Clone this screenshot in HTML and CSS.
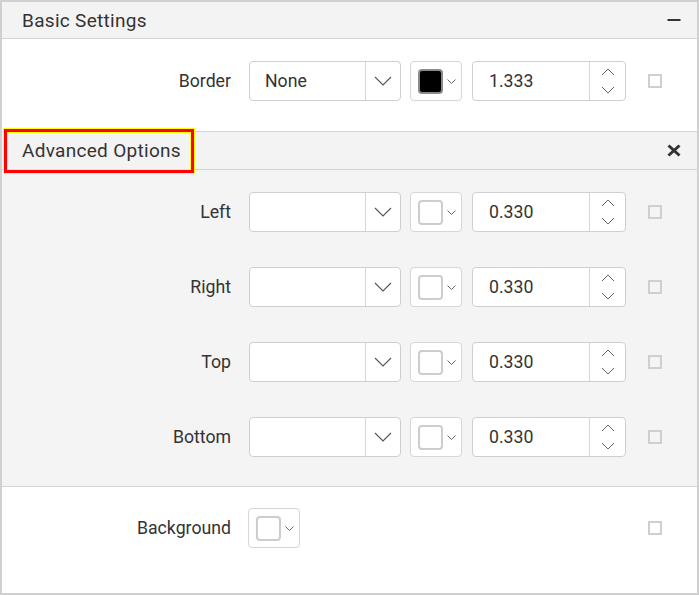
FILE: index.html
```html
<!DOCTYPE html>
<html>
<head>
<meta charset="utf-8">
<link rel="stylesheet" href="styles.css">
</head>
<body>
<div class="panel">
  <div class="head">
    <span class="head-title">Basic Settings</span>
    <svg class="head-icon" width="14" height="14" viewBox="0 0 14 14"><line x1="0.5" y1="7" x2="13.5" y2="7" stroke="#333" stroke-width="2"/></svg>
  </div>
  <div class="section basic">
    <div class="row">
      <span class="label">Border</span>
      <div class="dropdown"><span class="dd-text">None</span><span class="dd-btn"><svg width="18" height="10" viewBox="0 0 18 10"><polyline points="1,1 9,9 17,1" fill="none" stroke="#555" stroke-width="1.1"/></svg></span></div>
      <div class="picker"><span class="swatch swatch-black"></span><svg width="9" height="6" viewBox="0 0 9 6"><polyline points="0.5,0.5 4.5,4.5 8.5,0.5" fill="none" stroke="#666" stroke-width="1"/></svg></div>
      <div class="numeric"><span class="num-text">1.333</span><span class="spin"><svg width="14" height="26" viewBox="0 0 14 26"><polyline points="1,7 7,1 13,7" fill="none" stroke="#666" stroke-width="1"/><polyline points="1,19 7,25 13,19" fill="none" stroke="#666" stroke-width="1"/></svg></span></div>
      <span class="check"></span>
    </div>
  </div>
  <div class="head adv-head">
    <span class="adv-title">Advanced Options</span>
    <svg class="head-icon" width="14" height="13" viewBox="0 0 14 13"><line x1="1.5" y1="1.5" x2="12.5" y2="11.5" stroke="#333" stroke-width="3"/><line x1="12.5" y1="1.5" x2="1.5" y2="11.5" stroke="#333" stroke-width="3"/></svg>
  </div>
  <div class="section advanced">
    <div class="row">
      <span class="label">Left</span>
      <div class="dropdown"><span class="dd-text"></span><span class="dd-btn"><svg width="18" height="10" viewBox="0 0 18 10"><polyline points="1,1 9,9 17,1" fill="none" stroke="#555" stroke-width="1.1"/></svg></span></div>
      <div class="picker"><span class="swatch"></span><svg width="9" height="6" viewBox="0 0 9 6"><polyline points="0.5,0.5 4.5,4.5 8.5,0.5" fill="none" stroke="#666" stroke-width="1"/></svg></div>
      <div class="numeric"><span class="num-text">0.330</span><span class="spin"><svg width="14" height="26" viewBox="0 0 14 26"><polyline points="1,7 7,1 13,7" fill="none" stroke="#666" stroke-width="1"/><polyline points="1,19 7,25 13,19" fill="none" stroke="#666" stroke-width="1"/></svg></span></div>
      <span class="check"></span>
    </div>
    <div class="row">
      <span class="label">Right</span>
      <div class="dropdown"><span class="dd-text"></span><span class="dd-btn"><svg width="18" height="10" viewBox="0 0 18 10"><polyline points="1,1 9,9 17,1" fill="none" stroke="#555" stroke-width="1.1"/></svg></span></div>
      <div class="picker"><span class="swatch"></span><svg width="9" height="6" viewBox="0 0 9 6"><polyline points="0.5,0.5 4.5,4.5 8.5,0.5" fill="none" stroke="#666" stroke-width="1"/></svg></div>
      <div class="numeric"><span class="num-text">0.330</span><span class="spin"><svg width="14" height="26" viewBox="0 0 14 26"><polyline points="1,7 7,1 13,7" fill="none" stroke="#666" stroke-width="1"/><polyline points="1,19 7,25 13,19" fill="none" stroke="#666" stroke-width="1"/></svg></span></div>
      <span class="check"></span>
    </div>
    <div class="row">
      <span class="label">Top</span>
      <div class="dropdown"><span class="dd-text"></span><span class="dd-btn"><svg width="18" height="10" viewBox="0 0 18 10"><polyline points="1,1 9,9 17,1" fill="none" stroke="#555" stroke-width="1.1"/></svg></span></div>
      <div class="picker"><span class="swatch"></span><svg width="9" height="6" viewBox="0 0 9 6"><polyline points="0.5,0.5 4.5,4.5 8.5,0.5" fill="none" stroke="#666" stroke-width="1"/></svg></div>
      <div class="numeric"><span class="num-text">0.330</span><span class="spin"><svg width="14" height="26" viewBox="0 0 14 26"><polyline points="1,7 7,1 13,7" fill="none" stroke="#666" stroke-width="1"/><polyline points="1,19 7,25 13,19" fill="none" stroke="#666" stroke-width="1"/></svg></span></div>
      <span class="check"></span>
    </div>
    <div class="row">
      <span class="label">Bottom</span>
      <div class="dropdown"><span class="dd-text"></span><span class="dd-btn"><svg width="18" height="10" viewBox="0 0 18 10"><polyline points="1,1 9,9 17,1" fill="none" stroke="#555" stroke-width="1.1"/></svg></span></div>
      <div class="picker"><span class="swatch"></span><svg width="9" height="6" viewBox="0 0 9 6"><polyline points="0.5,0.5 4.5,4.5 8.5,0.5" fill="none" stroke="#666" stroke-width="1"/></svg></div>
      <div class="numeric"><span class="num-text">0.330</span><span class="spin"><svg width="14" height="26" viewBox="0 0 14 26"><polyline points="1,7 7,1 13,7" fill="none" stroke="#666" stroke-width="1"/><polyline points="1,19 7,25 13,19" fill="none" stroke="#666" stroke-width="1"/></svg></span></div>
      <span class="check"></span>
    </div>
  </div>
  <div class="section bg">
    <div class="row">
      <span class="label">Background</span>
      <div class="picker picker-bg"><span class="swatch"></span><svg width="9" height="6" viewBox="0 0 9 6"><polyline points="0.5,0.5 4.5,4.5 8.5,0.5" fill="none" stroke="#666" stroke-width="1"/></svg></div>
      <span class="check"></span>
    </div>
  </div>
</div>
</body>
</html>
```

FILE: styles.css
```css
* { box-sizing: border-box; }
html, body { margin: 0; padding: 0; background: #fff; }
body {
  font-family: Roboto, "Liberation Sans", sans-serif;
  color: #333;
  width: 699px;
  height: 595px;
}
.panel {
  width: 699px;
  height: 595px;
  border: 2px solid #d0d0d0;
  display: flex;
  flex-direction: column;
}
.head {
  height: 37px;
  background: #f3f3f3;
  border-bottom: 1px solid #d3d3d3;
  display: flex;
  align-items: center;
  justify-content: space-between;
  padding: 0 16px 0 20px;
  flex: none;
}
.head-title {
  font-size: 19px;
  letter-spacing: 0.3px;
  line-height: 20px;
  padding-top: 1px;
}
.head-icon { display: block; }
.adv-head {
  border-top: 1px solid #d3d3d3;
  height: 39px;
  padding-left: 2px;
}
.adv-title {
  position: relative;
  z-index: 1;
  width: 190px;
  height: 44px;
  border: 3px solid #ff0000;
  outline: 1px solid #ffff00;
  box-shadow: inset 0 0 0 1px #ffff00;
  background: #f3f3f3;
  font-size: 19px;
  letter-spacing: 0.3px;
  line-height: 20px;
  padding: 0 0 0 15px;
  display: flex;
  align-items: center;
  flex: none;
}
.section {
  display: flex;
  flex-direction: column;
  flex: none;
}
.basic {
  padding: 22px 0 0;
  height: 92px;
}
.advanced {
  background: #f4f4f4;
  padding: 22px 0 0;
  gap: 35px;
  height: 317px;
  border-bottom: 1px solid #d3d3d3;
}
.bg {
  padding: 21px 0 0;
  flex: 1;
}
.row {
  display: flex;
  align-items: center;
  height: 40px;
  padding-right: 35px;
}
.label {
  width: 229px;
  text-align: right;
  font-size: 17.7px;
  line-height: 20px;
  flex: none;
}
.dropdown {
  margin-left: 18px;
  width: 152px;
  height: 40px;
  border: 1px solid #cfcfcf;
  border-radius: 4px;
  background: #fff;
  display: flex;
  flex: none;
}
.dd-text {
  flex: 1;
  font-size: 17.7px;
  line-height: 38px;
  padding-left: 15px;
}
.dd-btn {
  width: 35px;
  border-left: 1px solid #d6d6d6;
  display: flex;
  align-items: center;
  justify-content: center;
}
.dd-btn svg { display: block; }
.picker {
  margin-left: 9px;
  width: 52px;
  height: 40px;
  border: 1px solid #d6d6d6;
  border-radius: 4px;
  background: #fff;
  display: flex;
  align-items: center;
  padding-left: 7px;
  gap: 4px;
  flex: none;
}
.picker svg { display: block; margin-top: 1px; }
.picker-bg { margin-left: 17px; }
.swatch {
  width: 25px;
  height: 25px;
  border: 2px solid #cdcdcd;
  border-radius: 4px;
  background: #fff;
  flex: none;
}
.swatch-black {
  background: #000;
  border-color: #8a8a8a;
}
.numeric {
  margin-left: 10px;
  width: 154px;
  height: 40px;
  border: 1px solid #cfcfcf;
  border-radius: 4px;
  background: #fff;
  display: flex;
  flex: none;
}
.num-text {
  flex: 1;
  font-size: 17.7px;
  line-height: 38px;
  padding-left: 16px;
}
.spin {
  width: 36px;
  border-left: 1px solid #d6d6d6;
  display: flex;
  align-items: center;
  justify-content: center;
}
.spin svg { display: block; }
.check {
  margin-left: auto;
  width: 14px;
  height: 14px;
  border: 2px solid #cfcfcf;
  flex: none;
}
```
